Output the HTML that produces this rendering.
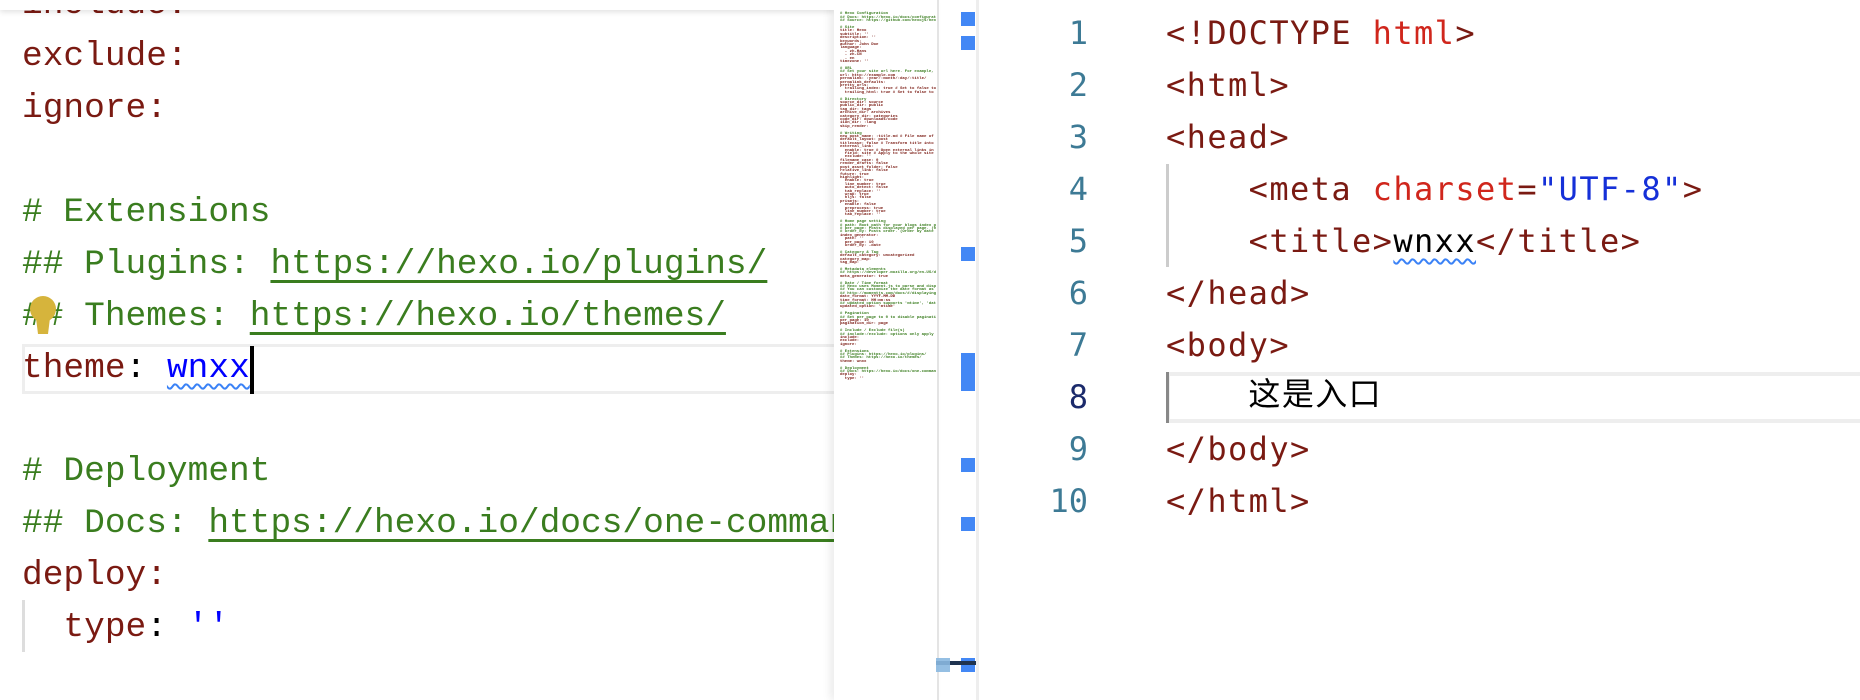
<!DOCTYPE html>
<html><head><meta charset="utf-8"><style>
html,body{margin:0;padding:0;width:1860px;height:700px;overflow:hidden;background:#fff;position:relative}
.clip{position:absolute;left:0;top:0;width:834px;height:700px;overflow:hidden}
.l{position:absolute;left:22px;white-space:pre;font-family:"Liberation Mono",monospace;font-size:34.5px;line-height:52px;height:52px}
.r{position:absolute;left:1166px;white-space:pre;font-family:"DejaVu Sans Mono","Noto Sans CJK SC",monospace;font-size:32px;letter-spacing:1.4px;line-height:52px;height:52px}
.n{position:absolute;width:60px;left:1028px;text-align:right;font-family:"DejaVu Sans Mono",monospace;font-size:32px;line-height:52px;color:#3d7a95}
.k{color:#7a1a12}.c{color:#3a7d1f}.u{text-decoration:underline;text-decoration-thickness:3px;text-underline-offset:7px}
.b{color:#0000ff}.t{color:#7a1a12}.a{color:#d0261c}.v{color:#1530d8}
.sq{text-decoration:underline wavy #3b82f6;text-decoration-thickness:2px;text-underline-offset:6px}
.mk{position:absolute;left:961px;width:14px;background:#4287f5}
</style></head><body>
<div class="clip">
<div style="position:absolute;left:0;top:0;width:834px;height:10px;background:#fff;box-shadow:0 2px 6px rgba(0,0,0,.12);z-index:2"></div>
<div class="l k" style="top:-21px">include:</div>
<div class="l k" style="top:31px">exclude:</div>
<div class="l k" style="top:83px">ignore:</div>
<div class="l c" style="top:187px"># Extensions</div>
<div class="l c" style="top:239px">## Plugins: <span class="u">https://hexo.io/plugins/</span></div>
<div class="l c" style="top:291px">## Themes: <span class="u">https://hexo.io/themes/</span></div>
<div style="position:absolute;left:22px;top:344px;width:820px;height:44px;border:3px solid #eee;border-right:none"></div>
<div class="l" style="top:343px"><span class="k">theme</span>: <span class="b sq">wnxx</span></div>
<div style="position:absolute;left:250px;top:346px;width:4px;height:48px;background:#000"></div>
<svg style="position:absolute;left:28px;top:294px" width="30" height="46" viewBox="0 0 30 46"><circle cx="15" cy="15" r="13" fill="#d6b43c"/><path d="M8 24 L10 40 L20 40 L22 24Z" fill="#d6b43c"/></svg>
<div class="l c" style="top:446px"># Deployment</div>
<div class="l c" style="top:498px">## Docs: <span class="u">https://hexo.io/docs/one-command-deployment</span></div>
<div class="l k" style="top:550px">deploy:</div>
<div style="position:absolute;left:22px;top:600px;width:3px;height:52px;background:#ddd"></div>
<div class="l" style="top:602px">  <span class="k">type</span>: <span class="b">''</span></div>
</div>
<div style="position:absolute;left:834px;top:0;width:104px;height:700px;background:#fff;box-shadow:-4px 0 8px rgba(0,0,0,.08)"></div>
<div style="position:absolute;left:840px;top:10px;width:96px;height:392px;overflow:hidden">
<div style="font-family:'Liberation Mono',monospace;font-size:4px;line-height:3.4px;white-space:pre;color:#3a7d1f;font-weight:bold">
# Hexo Configuration
## Docs: https://hexo.io/docs/configuration.html
## Source: https://github.com/hexojs/hexo/

# Site
<span class="k">title: Hexo
subtitle: ''
description: ''
keywords:
author: John Doe
language:
  - zh-Hans
  - zh-CN
  - en
timezone: ''</span>

# URL
## Set your site url here. For example, if you use
<span class="k">url: http://example.com
permalink: :year/:month/:day/:title/
permalink_defaults:
pretty_urls:
  trailing_index: true # Set to false to remove
  trailing_html: true # Set to false to remove</span>

# Directory
<span class="k">source_dir: source
public_dir: public
tag_dir: tags
archive_dir: archives
category_dir: categories
code_dir: downloads/code
i18n_dir: :lang
skip_render:</span>

# Writing
<span class="k">new_post_name: :title.md # File name of new posts
default_layout: post
titlecase: false # Transform title into titlecase
external_link:
  enable: true # Open external links in new tab
  field: site # Apply to the whole site
  exclude: ''
filename_case: 0
render_drafts: false
post_asset_folder: false
relative_link: false
future: true
highlight:
  enable: true
  line_number: true
  auto_detect: false
  tab_replace: ''
  wrap: true
  hljs: false
prismjs:
  enable: false
  preprocess: true
  line_number: true
  tab_replace: ''</span>

# Home page setting
# path: Root path for your blogs index page.
# per_page: Posts displayed per page. (0 = disable)
# order_by: Posts order. (Order by date descending)
<span class="k">index_generator:
  path: ''
  per_page: 10
  order_by: -date</span>

# Category &amp; Tag
<span class="k">default_category: uncategorized
category_map:
tag_map:</span>

# Metadata elements
## https://developer.mozilla.org/en-US/docs/Web
<span class="k">meta_generator: true</span>

# Date / Time format
## Hexo uses Moment.js to parse and display date
## You can customize the date format as defined
## http://momentjs.com/docs/#/displaying/format/
<span class="k">date_format: YYYY-MM-DD
time_format: HH:mm:ss</span>
## updated_option supports 'mtime', 'date', 'empty'
<span class="k">updated_option: 'mtime'</span>

# Pagination
## Set per_page to 0 to disable pagination
<span class="k">per_page: 10
pagination_dir: page</span>

# Include / Exclude file(s)
## include:/exclude: options only apply to the
<span class="k">include:
exclude:
ignore:</span>

# Extensions
## Plugins: https://hexo.io/plugins/
## Themes: https://hexo.io/themes/
<span class="k">theme: wnxx</span>

# Deployment
## Docs: https://hexo.io/docs/one-command-deployment
<span class="k">deploy:
  type: ''</span>
</div></div>
<div style="position:absolute;left:937px;top:0;width:2px;height:700px;background:#e4e4e4"></div>
<div style="position:absolute;left:976px;top:0;width:3px;height:700px;background:#eee"></div>
<div class="mk" style="top:12px;height:14px"></div>
<div class="mk" style="top:36px;height:14px"></div>
<div class="mk" style="top:247px;height:14px"></div>
<div class="mk" style="top:353px;height:38px"></div>
<div class="mk" style="top:458px;height:14px"></div>
<div class="mk" style="top:517px;height:14px"></div>
<div class="mk" style="top:658px;height:14px"></div>
<div style="position:absolute;left:936px;top:661px;width:40px;height:4px;background:#1f3350"></div>
<div style="position:absolute;left:936px;top:658px;width:14px;height:14px;background:#8ab8e0;opacity:.9"></div>

<div class="n" style="top:7px">1</div><div class="n" style="top:59px">2</div><div class="n" style="top:111px">3</div><div class="n" style="top:163px">4</div><div class="n" style="top:215px">5</div><div class="n" style="top:267px">6</div><div class="n" style="top:319px">7</div><div class="n" style="top:371px;color:#1b2a6b">8</div><div class="n" style="top:423px">9</div><div class="n" style="top:475px">10</div>
<div style="position:absolute;left:1166px;top:164px;width:3px;height:103px;background:#ccc"></div>
<div style="position:absolute;left:1166px;top:372px;width:694px;height:43px;border:4px solid #eee;border-right:none"></div>
<div style="position:absolute;left:1166px;top:372px;width:3px;height:51px;background:#888"></div>
<div class="r" style="top:7px"><span class="t">&lt;!DOCTYPE </span><span class="a">html</span><span class="t">&gt;</span></div>
<div class="r t" style="top:59px">&lt;html&gt;</div>
<div class="r t" style="top:111px">&lt;head&gt;</div>
<div class="r" style="top:163px">    <span class="t">&lt;meta </span><span class="a">charset</span><span class="t">=</span><span class="v">"UTF-8"</span><span class="t">&gt;</span></div>
<div class="r" style="top:215px">    <span class="t">&lt;title&gt;</span><span class="sq">wnxx</span><span class="t">&lt;/title&gt;</span></div>
<div class="r t" style="top:267px">&lt;/head&gt;</div>
<div class="r t" style="top:319px">&lt;body&gt;</div>
<div class="r" style="top:371px;font-family:'Liberation Mono','Noto Sans CJK SC',sans-serif">    这是入口</div>
<div class="r t" style="top:423px">&lt;/body&gt;</div>
<div class="r t" style="top:475px">&lt;/html&gt;</div>
</body></html>
